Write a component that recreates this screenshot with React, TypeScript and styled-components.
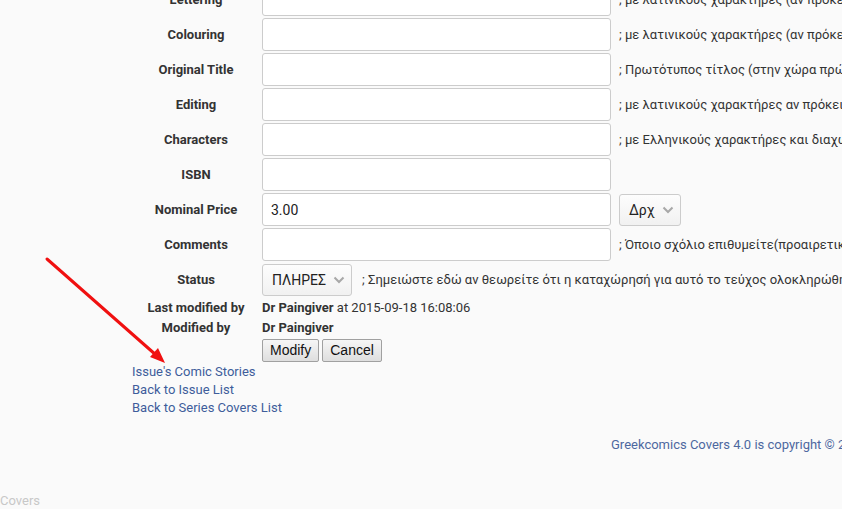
import React from 'react'
import styled, { createGlobalStyle } from 'styled-components'

const GlobalStyle = createGlobalStyle`
  html, body {
    margin: 0;
    padding: 0;
    background: #fafafa;
    overflow: hidden;
  }
  body {
    font-family: Roboto, 'Liberation Sans', sans-serif;
    font-size: 13px;
    color: #333;
  }
`

const Page = styled.div`
  position: relative;
  width: 842px;
  height: 509px;
  overflow: hidden;
`

const Form = styled.div`
  margin-top: -18px;
  margin-left: 138px;
`

const Row = styled.div<{ $h: number }>`
  display: grid;
  grid-template-columns: 116px 349px auto;
  column-gap: 8px;
  align-items: center;
  height: ${p => p.$h}px;
  white-space: nowrap;
`

const Label = styled.div`
  text-align: center;
  font-weight: 700;
  font-size: 13px;
  color: #333;
`

const TextInput = styled.input`
  box-sizing: border-box;
  width: 349px;
  height: 33px;
  border: 1px solid #ccc;
  border-radius: 3px;
  background: #fff;
  padding: 0 8px;
  font-family: Roboto, 'Liberation Sans', sans-serif;
  font-size: 14px;
  color: #222;
  outline: none;
`

const Hint = styled.span`
  font-size: 13px;
  color: #333;
`

const SpanCell = styled.div`
  grid-column: 2 / span 2;
  display: flex;
  align-items: center;
  gap: 10px;
`

const SelectBox = styled.div<{ $w: number }>`
  box-sizing: border-box;
  width: ${p => p.$w}px;
  height: 32px;
  border: 1px solid #ccc;
  border-radius: 3px;
  background: linear-gradient(#fdfdfd, #f1f1f1);
  display: flex;
  align-items: center;
  justify-content: space-between;
  padding: 0 6px 0 9px;
  font-size: 14px;
  color: #222;
`

const Chevron = () => (
  <svg width="12" height="8" viewBox="0 0 12 8">
    <path d="M1.5 1.5 L6 6 L10.5 1.5" fill="none" stroke="#a8a8a8" strokeWidth="2" />
  </svg>
)

const Value = styled.div<{ $bold?: boolean }>`
  font-weight: ${p => (p.$bold ? 700 : 400)};
  b { font-weight: 700; }
`

const Buttons = styled.div`
  grid-column: 2;
  display: flex;
  gap: 3px;
`

const Button = styled.button`
  height: 23px;
  padding: 0 7px;
  border: 1px solid #a0a0a0;
  border-radius: 2px;
  background: linear-gradient(#f6f6f6, #dedede);
  font-family: 'Liberation Sans', Arial, sans-serif;
  font-size: 14px;
  color: #111;
`

const Links = styled.div`
  margin-left: 132px;
  display: flex;
  flex-direction: column;
`

const Link = styled.a`
  line-height: 18px;
  color: #3e5d9b;
  text-decoration: none;
`

const Footer = styled.div`
  margin-top: 19px;
  padding-left: 611px;
  line-height: 18px;
  color: #4d68a0;
  white-space: nowrap;
`

const Bottom = styled.div`
  margin-top: 38px;
  line-height: 18px;
  color: #c8c8c8;
`

const Arrow = styled.svg`
  position: absolute;
  left: 0;
  top: 0;
  pointer-events: none;
`

const fields = [
  { label: 'Lettering', hint: '; με λατινικούς χαρακτήρες (αν πρόκειται για ξένο έργο)' },
  { label: 'Colouring', hint: '; με λατινικούς χαρακτήρες (αν πρόκειται για ξένο έργο)' },
  { label: 'Original Title', hint: '; Πρωτότυπος τίτλος (στην χώρα πρώτης έκδοσης)' },
  { label: 'Editing', hint: '; με λατινικούς χαρακτήρες αν πρόκειται για ξένο έργο' },
  { label: 'Characters', hint: '; με Ελληνικούς χαρακτήρες και διαχωρισμένους με κόμμα' },
  { label: 'ISBN', hint: '' },
]

export default function App() {
  return (
    <Page>
      <GlobalStyle />
      <Form>
        {fields.map(f => (
          <Row $h={35} key={f.label}>
            <Label>{f.label}</Label>
            <TextInput readOnly value="" />
            <Hint>{f.hint}</Hint>
          </Row>
        ))}
        <Row $h={35}>
          <Label>Nominal Price</Label>
          <TextInput readOnly value="3.00" />
          <div>
            <SelectBox $w={62}>
              Δρχ <Chevron />
            </SelectBox>
          </div>
        </Row>
        <Row $h={35}>
          <Label>Comments</Label>
          <TextInput readOnly value="" />
          <Hint>; Όποιο σχόλιο επιθυμείτε(προαιρετικό)</Hint>
        </Row>
        <Row $h={35}>
          <Label>Status</Label>
          <SpanCell>
            <SelectBox $w={90}>
              ΠΛΗΡΕΣ <Chevron />
            </SelectBox>
            <Hint>; Σημειώστε εδώ αν θεωρείτε ότι η καταχώρησή για αυτό το τεύχος ολοκληρώθηκε</Hint>
          </SpanCell>
        </Row>
        <Row $h={20}>
          <Label>Last modified by</Label>
          <Value>
            <b>Dr Paingiver</b> at 2015-09-18 16:08:06
          </Value>
        </Row>
        <Row $h={20}>
          <Label>Modified by</Label>
          <Value $bold>Dr Paingiver</Value>
        </Row>
        <Row $h={26}>
          <div />
          <Buttons>
            <Button>Modify</Button>
            <Button>Cancel</Button>
          </Buttons>
        </Row>
      </Form>
      <Links>
        <Link href="#">Issue's Comic Stories</Link>
        <Link href="#">Back to Issue List</Link>
        <Link href="#">Back to Series Covers List</Link>
      </Links>
      <Footer>Greekcomics Covers 4.0 is copyright © 2009-2015 Greekcomics</Footer>
      <Bottom>Covers</Bottom>
      <Arrow width="842" height="509" viewBox="0 0 842 509">
        <line x1="47" y1="259" x2="156" y2="355" stroke="#f01010" strokeWidth="3" strokeLinecap="round" />
        <polygon points="165,363 150,357 158,348" fill="#f01010" />
      </Arrow>
    </Page>
  )
}
